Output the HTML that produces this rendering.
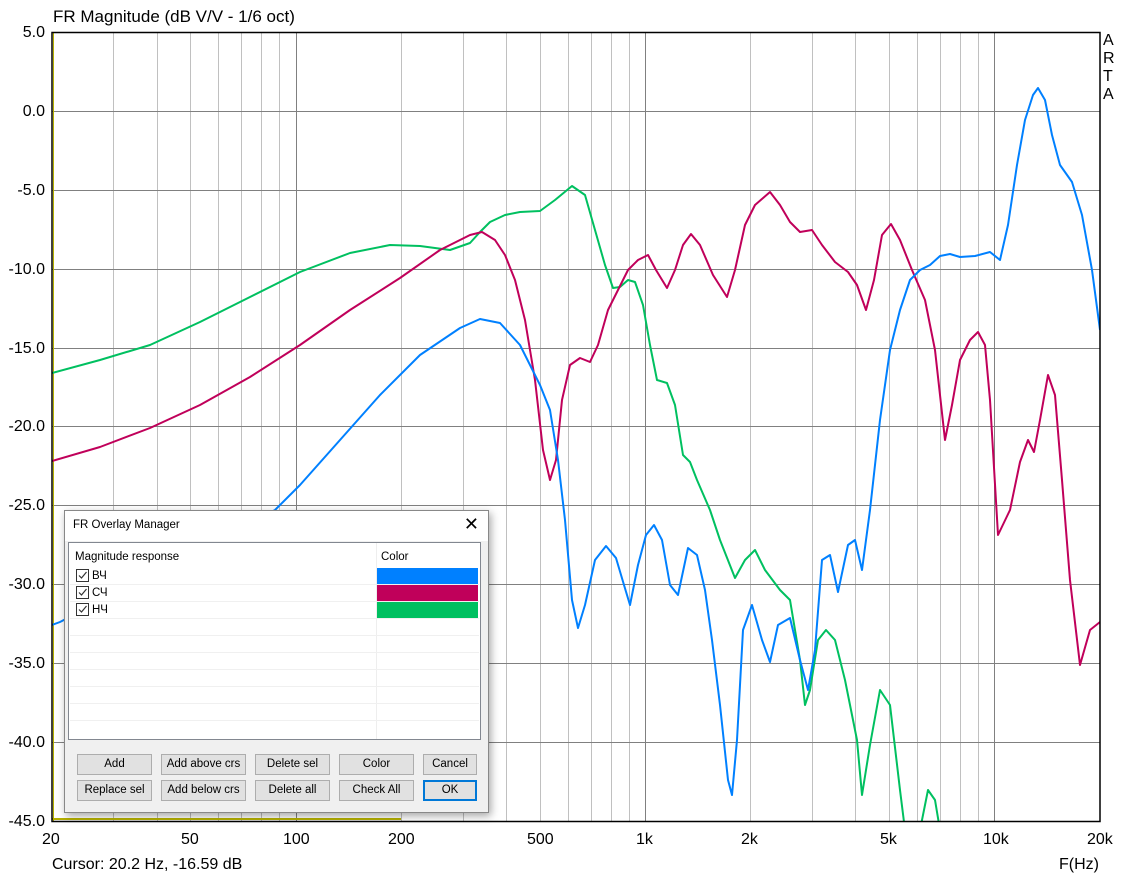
<!DOCTYPE html>
<html><head><meta charset="utf-8"><style>
body{margin:0;width:1125px;height:878px;background:#fff;overflow:hidden;position:relative;font-family:"Liberation Sans",sans-serif}
.t{position:absolute;font-size:16px;color:#000;white-space:nowrap}
.dlg{position:absolute;left:64px;top:510px;width:423px;height:301px;background:#f0f0f0;border:1px solid #888;box-shadow:2px 3px 8px rgba(0,0,0,.35);font-family:"Liberation Sans","DejaVu Sans",sans-serif;font-size:11.5px;color:#000}
.ttl{position:absolute;left:0;top:0;width:423px;height:30px;background:#fff}
.lb{position:absolute;left:3px;top:31px;width:411px;height:196px;border:1px solid #828790;background:#fff}
.b{position:absolute;height:19px;background:#e1e1e1;border:1px solid #adadad;text-align:center;line-height:19px;box-sizing:content-box}
.row{position:absolute;left:1px;width:409px;height:16px;border-bottom:1px solid #f0f0f0}
.cb{position:absolute;left:6px;top:1px;width:11px;height:11px;border:1px solid #333;background:#fff}
.cb svg{position:absolute;left:0;top:0}
</style></head><body>
<svg width="1125" height="878" style="position:absolute;left:0;top:0">
<g stroke="#c0c0c0" stroke-width="1">
<line x1="113.5" y1="32" x2="113.5" y2="822"/><line x1="157.5" y1="32" x2="157.5" y2="822"/><line x1="190.5" y1="32" x2="190.5" y2="822"/><line x1="218.5" y1="32" x2="218.5" y2="822"/><line x1="241.5" y1="32" x2="241.5" y2="822"/><line x1="261.5" y1="32" x2="261.5" y2="822"/><line x1="279.5" y1="32" x2="279.5" y2="822"/>
<line x1="401.5" y1="32" x2="401.5" y2="822"/><line x1="463.5" y1="32" x2="463.5" y2="822"/><line x1="506.5" y1="32" x2="506.5" y2="822"/><line x1="540.5" y1="32" x2="540.5" y2="822"/><line x1="568.5" y1="32" x2="568.5" y2="822"/><line x1="591.5" y1="32" x2="591.5" y2="822"/><line x1="611.5" y1="32" x2="611.5" y2="822"/><line x1="629.5" y1="32" x2="629.5" y2="822"/>
<line x1="750.5" y1="32" x2="750.5" y2="822"/><line x1="812.5" y1="32" x2="812.5" y2="822"/><line x1="855.5" y1="32" x2="855.5" y2="822"/><line x1="889.5" y1="32" x2="889.5" y2="822"/><line x1="917.5" y1="32" x2="917.5" y2="822"/><line x1="940.5" y1="32" x2="940.5" y2="822"/><line x1="960.5" y1="32" x2="960.5" y2="822"/><line x1="978.5" y1="32" x2="978.5" y2="822"/>
</g>
<g stroke="#808080" stroke-width="1">
<line x1="296.5" y1="32" x2="296.5" y2="822"/><line x1="645.5" y1="32" x2="645.5" y2="822"/><line x1="994.5" y1="32" x2="994.5" y2="822"/>
<line x1="52" y1="111.5" x2="1100" y2="111.5"/><line x1="52" y1="190.5" x2="1100" y2="190.5"/><line x1="52" y1="269.5" x2="1100" y2="269.5"/><line x1="52" y1="348.5" x2="1100" y2="348.5"/><line x1="52" y1="426.5" x2="1100" y2="426.5"/><line x1="52" y1="505.5" x2="1100" y2="505.5"/><line x1="52" y1="584.5" x2="1100" y2="584.5"/><line x1="52" y1="663.5" x2="1100" y2="663.5"/><line x1="52" y1="742.5" x2="1100" y2="742.5"/>
</g>
<line x1="53.5" y1="33" x2="53.5" y2="821" stroke="#b5b000" stroke-width="1"/>
<line x1="52" y1="819" x2="401" y2="819" stroke="#b5b000" stroke-width="2"/>
<defs><clipPath id="c"><rect x="52" y="32" width="1048" height="789"/></clipPath></defs>
<g clip-path="url(#c)" fill="none" stroke-width="2" stroke-linejoin="round">
<polyline stroke="#00c060" points="52,373 100,360 150,345 200,322 250,297 300,272 350,253 390,245 420,246 450,250 470,243 480,232 490,222 505,215 520,212 540,211 555,200 572,186 585,195 595,230 605,265 613,288 620,287 628,280 635,282 643,305 650,345 657,380 667,383 675,405 683,455 690,462 697,480 710,510 720,540 735,578 745,560 755,550 765,570 780,590 790,600 800,660 805,705 810,690 818,640 826,630 835,640 845,680 857,740 862,795 870,745 880,690 890,705 900,790 905,830 920,830 928,790 935,800 940,830"/>
<polyline stroke="#c0005a" points="52,461 100,447 150,428 200,405 250,377 300,345 350,310 400,278 440,250 470,235 482,232 495,240 505,255 515,280 525,320 535,380 543,450 550,480 556,460 562,400 570,365 580,358 590,362 598,345 608,310 618,290 628,270 638,260 648,255 656,270 667,288 675,270 683,245 691,234 700,245 713,275 727,297 735,270 745,225 755,205 770,192 780,205 790,222 800,232 812,230 822,245 835,262 848,272 857,285 866,310 874,280 882,235 891,224 900,240 912,270 925,300 935,350 945,440 952,405 960,360 970,340 978,332 985,345 990,400 998,535 1010,510 1020,462 1028,440 1034,452 1040,420 1048,375 1055,395 1062,480 1070,580 1080,665 1090,630 1100,622"/>
<polyline stroke="#0080ff" points="52,625 60,622 275,510 300,485 340,440 380,395 420,355 460,328 480,319 500,323 520,345 540,385 550,410 558,460 565,520 572,600 578,628 585,605 595,560 606,546 616,558 624,585 630,605 638,565 646,535 654,525 662,540 670,585 678,595 688,548 697,555 705,590 712,640 720,705 728,780 732,795 737,740 743,630 752,605 762,640 770,662 778,625 790,618 800,660 808,690 815,650 822,560 830,555 838,592 848,545 855,540 862,570 870,510 880,420 890,350 900,310 910,280 920,270 930,265 940,256 950,254 960,257 975,256 990,252 1000,260 1008,225 1017,165 1025,120 1033,95 1038,88 1045,100 1052,135 1060,165 1072,182 1082,215 1092,270 1100,330"/>
</g>
<rect x="52" y="32.5" width="1048" height="789" fill="none" stroke="#000" stroke-width="1.5"/>
</svg>
<div class="t" style="left:53px;top:7px;font-size:17px">FR Magnitude (dB V/V - 1/6 oct)</div>
<div class="t" style="left:1103px;top:32px;line-height:18px;font-size:16px">A<br>R<br>T<br>A</div>
<div class="t" style="right:1080px;top:24px">5.0</div>
<div class="t" style="right:1080px;top:103px">0.0</div>
<div class="t" style="right:1080px;top:182px">-5.0</div>
<div class="t" style="right:1080px;top:261px">-10.0</div>
<div class="t" style="right:1080px;top:340px">-15.0</div>
<div class="t" style="right:1080px;top:418px">-20.0</div>
<div class="t" style="right:1080px;top:497px">-25.0</div>
<div class="t" style="right:1080px;top:576px">-30.0</div>
<div class="t" style="right:1080px;top:655px">-35.0</div>
<div class="t" style="right:1080px;top:734px">-40.0</div>
<div class="t" style="right:1080px;top:813px">-45.0</div>
<div class="t" style="left:42px;top:831px">20</div>
<div class="t" style="left:181px;top:831px">50</div>
<div class="t" style="left:283px;top:831px">100</div>
<div class="t" style="left:388px;top:831px">200</div>
<div class="t" style="left:527px;top:831px">500</div>
<div class="t" style="left:636px;top:831px">1k</div>
<div class="t" style="left:741px;top:831px">2k</div>
<div class="t" style="left:880px;top:831px">5k</div>
<div class="t" style="left:983px;top:831px">10k</div>
<div class="t" style="left:1087px;top:831px">20k</div>
<div class="t" style="left:1059px;top:856px">F(Hz)</div>
<div class="t" style="left:52px;top:856px">Cursor: 20.2 Hz, -16.59 dB</div>
<div class="dlg">
<div class="ttl"><span style="position:absolute;left:8px;top:8px;font-size:11.5px">FR Overlay Manager</span><span style="position:absolute;right:9px;top:3px;font-size:18px;font-weight:300">✕</span></div>
<div class="lb">
<span style="position:absolute;left:6px;top:8px">Magnitude response</span>
<div style="position:absolute;left:307px;top:0;width:1px;height:196px;background:#eee"></div>
<span style="position:absolute;left:312px;top:8px">Color</span>
<div class="row" style="top:25px"><div class="cb"><svg width="11" height="11"><path d="M2 5.5 L4.5 8 L9.5 2" fill="none" stroke="#333" stroke-width="1.2"/></svg></div><span style="position:absolute;left:22px;top:2px">ВЧ</span><div style="position:absolute;left:307px;top:0;width:101px;height:16px;background:#0080ff"></div></div>
<div class="row" style="top:42px"><div class="cb"><svg width="11" height="11"><path d="M2 5.5 L4.5 8 L9.5 2" fill="none" stroke="#333" stroke-width="1.2"/></svg></div><span style="position:absolute;left:22px;top:2px">СЧ</span><div style="position:absolute;left:307px;top:0;width:101px;height:16px;background:#c0005a"></div></div>
<div class="row" style="top:59px"><div class="cb"><svg width="11" height="11"><path d="M2 5.5 L4.5 8 L9.5 2" fill="none" stroke="#333" stroke-width="1.2"/></svg></div><span style="position:absolute;left:22px;top:2px">НЧ</span><div style="position:absolute;left:307px;top:0;width:101px;height:16px;background:#00c060"></div></div>
<div class="row" style="top:76px"></div><div class="row" style="top:93px"></div><div class="row" style="top:110px"></div><div class="row" style="top:127px"></div><div class="row" style="top:144px"></div><div class="row" style="top:161px"></div>
</div>
<div class="b" style="left:12px;top:243px;width:73px">Add</div>
<div class="b" style="left:96px;top:243px;width:83px">Add above crs</div>
<div class="b" style="left:190px;top:243px;width:73px">Delete sel</div>
<div class="b" style="left:274px;top:243px;width:73px">Color</div>
<div class="b" style="left:358px;top:243px;width:52px">Cancel</div>
<div class="b" style="left:12px;top:269px;width:73px">Replace sel</div>
<div class="b" style="left:96px;top:269px;width:83px">Add below crs</div>
<div class="b" style="left:190px;top:269px;width:73px">Delete all</div>
<div class="b" style="left:274px;top:269px;width:73px">Check All</div>
<div class="b" style="left:358px;top:269px;width:50px;height:17px;line-height:17px;border:2px solid #0078d7">OK</div>
</div>
</body></html>
